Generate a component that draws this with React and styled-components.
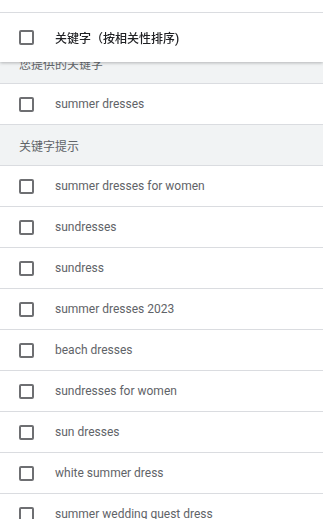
import React, { useLayoutEffect, useRef } from 'react';
import styled, { createGlobalStyle } from 'styled-components';

const GlobalStyle = createGlobalStyle`
    html, body {
        margin: 0;
        padding: 0;
        background: #fff;
    }
    body {
        font-family: Roboto, 'Noto Sans CJK SC', sans-serif;
    }
`;

const suggestions = [
    'summer dresses for women',
    'sundresses',
    'sundress',
    'summer dresses 2023',
    'beach dresses',
    'sundresses for women',
    'sun dresses',
    'white summer dress',
    'summer wedding guest dress',
    'summer dresses for women 2023',
    'floral summer dresses',
];

const App = () => {
    const scrollRef = useRef(null);

    // the list is scrolled a little so the first group title sits under the header
    useLayoutEffect(() => {
        if (scrollRef.current) scrollRef.current.scrollTop = 19;
    }, []);

    return (
        <Page>
            <GlobalStyle />
            <TopGap />
            <Scroller ref={scrollRef}>
                <Header>
                    <Checkbox />
                    <HeaderLabel>关键字（按相关性排序)</HeaderLabel>
                </Header>

                <GroupTitle>您提供的关键字</GroupTitle>
                <Row>
                    <Checkbox />
                    <RowLabel>summer dresses</RowLabel>
                </Row>

                <GroupTitle>关键字提示</GroupTitle>
                {suggestions.map((s) => (
                    <Row key={s}>
                        <Checkbox />
                        <RowLabel>{s}</RowLabel>
                    </Row>
                ))}
            </Scroller>
        </Page>
    );
};

export default App;

//Styles
const Page = styled.div`
    width: 323px;
    height: 519px;
    display: flex;
    flex-direction: column;
    overflow: hidden;
    background: #fff;
`;

const TopGap = styled.div`
    height: 12px;
    flex-shrink: 0;
    border-bottom: 1px solid #dadce0;
`;

const Scroller = styled.div`
    flex: 1;
    overflow-y: auto;
    scrollbar-width: none;
    &::-webkit-scrollbar {
        display: none;
    }
`;

const Header = styled.div`
    position: sticky;
    top: 0;
    z-index: 2;
    height: 49px;
    display: flex;
    align-items: center;
    padding-left: 19px;
    background: #fff;
    box-shadow: 0 1px 3px rgba(60, 64, 67, 0.35);
`;

const Checkbox = styled.span`
    box-sizing: border-box;
    width: 15px;
    height: 15px;
    flex-shrink: 0;
    border: 2px solid #6e6f72;
    border-radius: 2px;
    margin-right: 21px;
`;

const HeaderLabel = styled.span`
    font-size: 12px;
    font-weight: 500;
    color: #202124;
`;

const GroupTitle = styled.div`
    height: 40px;
    display: flex;
    align-items: center;
    padding-left: 19px;
    background: #f1f3f4;
    border-bottom: 1px solid #dadce0;
    font-size: 12px;
    color: #5f6368;
`;

const Row = styled.div`
    height: 40px;
    display: flex;
    align-items: center;
    padding-left: 19px;
    background: #fff;
    border-bottom: 1px solid #dadce0;
`;

const RowLabel = styled.span`
    font-size: 12px;
    color: #5f6368;
`;
